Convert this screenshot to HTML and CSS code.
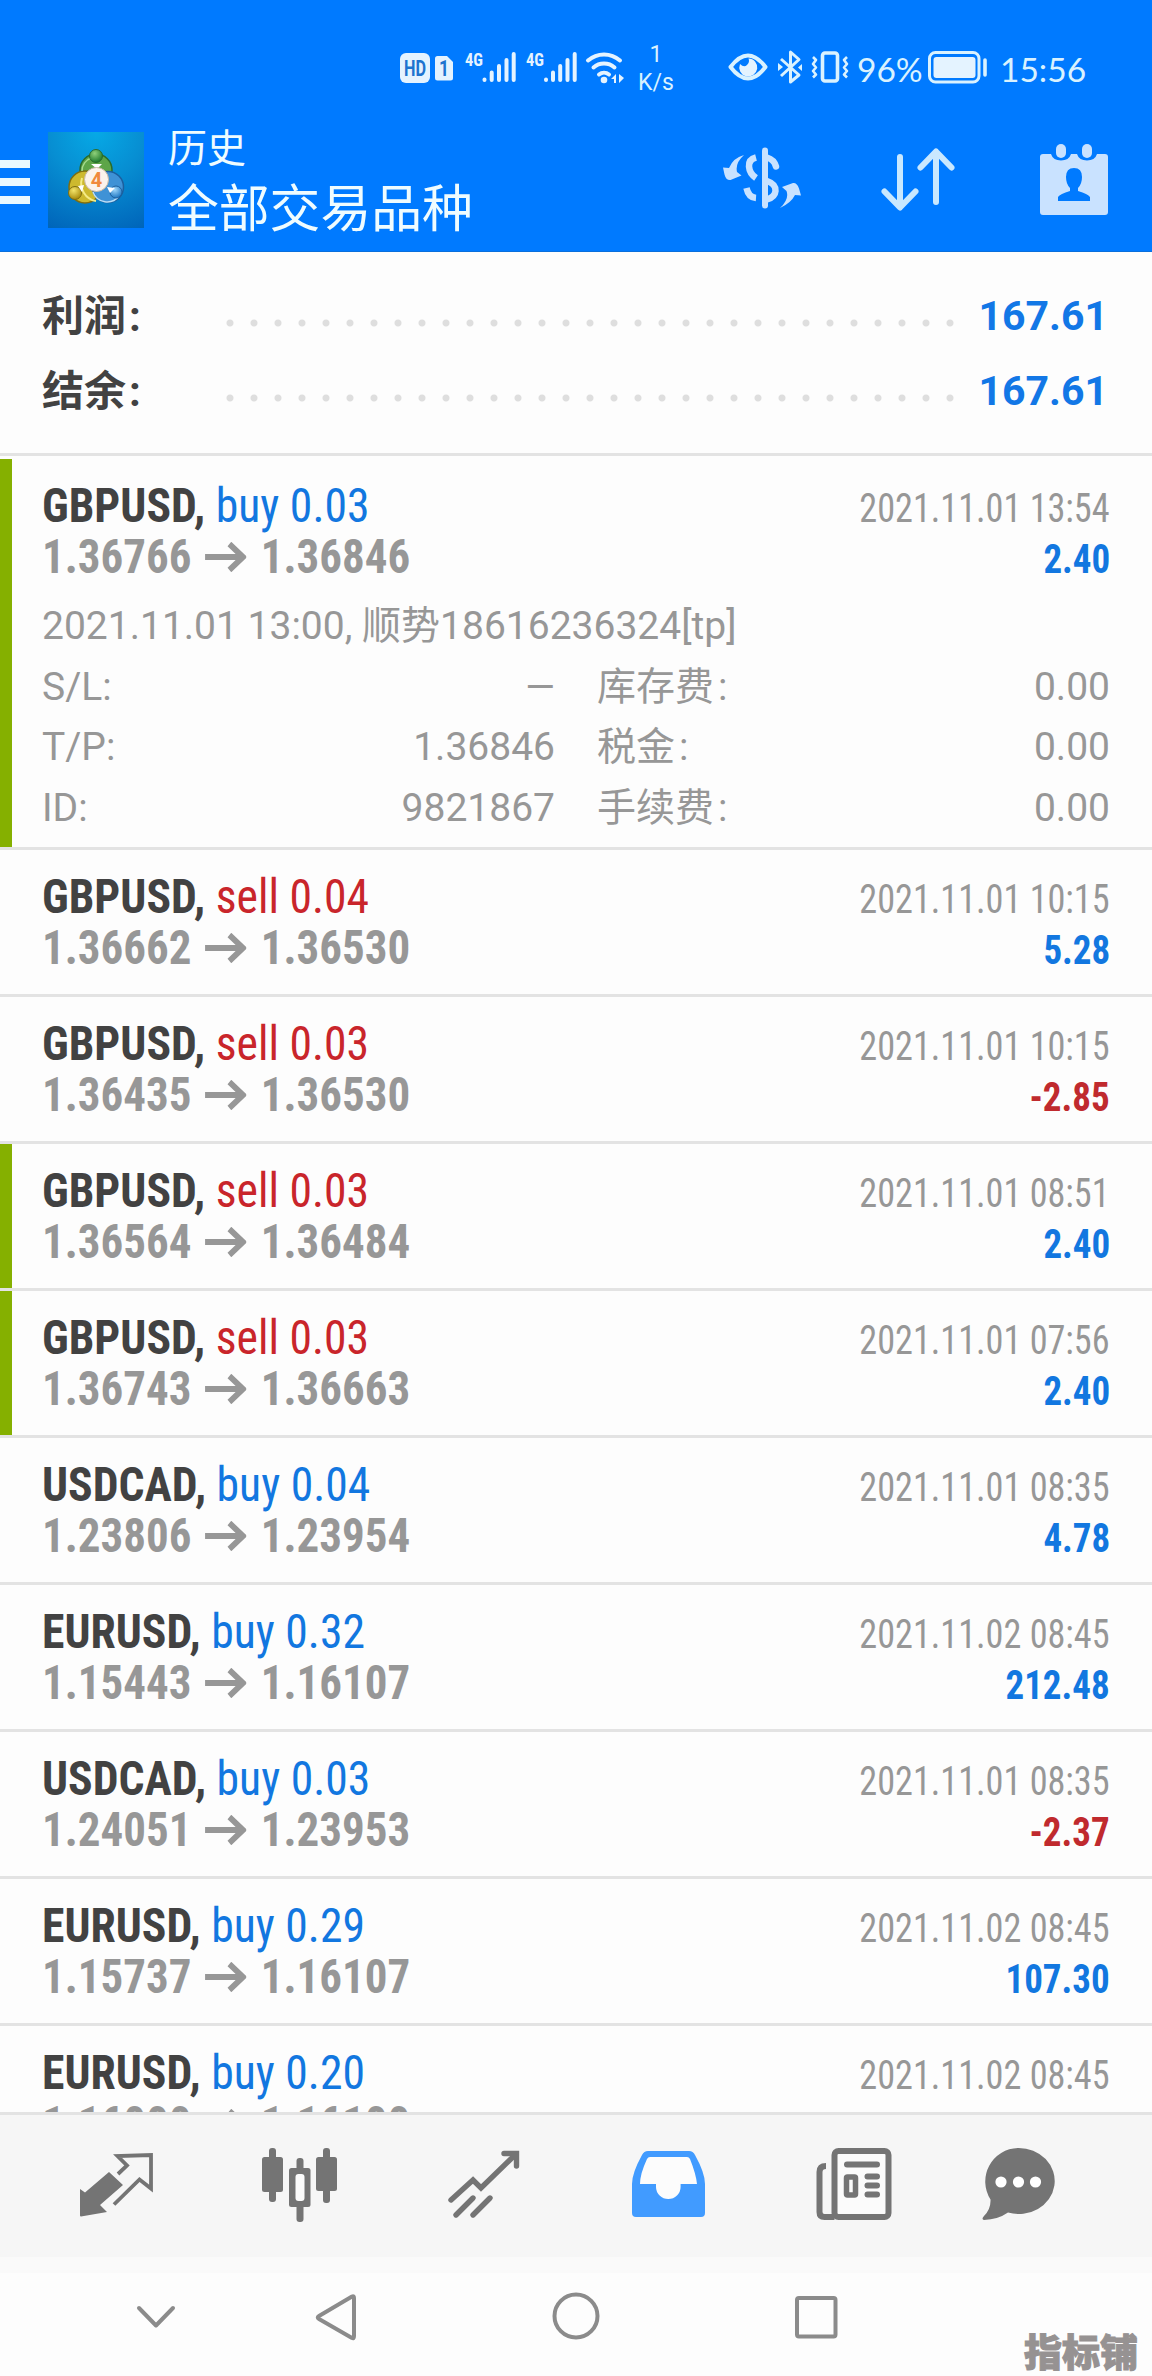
FILE: index.html
```html
<!DOCTYPE html>
<html lang="zh-CN">
<head>
<meta charset="utf-8">
<title>历史</title>
<link rel="stylesheet" href="styles.css">
</head>
<body>
<svg width="0" height="0" class="defs">
  <symbol id="arrow" viewBox="0 0 44 30"><path d="M0 15H40M26 2L40.500 15L26 28" fill="none" stroke="#979797" stroke-width="6"/></symbol>
</svg>
<div class="screen">
<header class="top">
  <div class="status">
    <svg class="st-left" width="224" height="44" viewBox="400 45 224 44">
      <g fill="#e4f3ff">
        <rect x="400" y="53" width="30" height="30" rx="6"/>
        <path d="M438 56h9l6 6v16a2.500 2.500 0 0 1-2.500 2.500h-13a2.500 2.500 0 0 1-2.500-2.500V58.500a2.500 2.500 0 0 1 2.500-2.500z"/>
        <g class="st-4g"><text x="465" y="66" textLength="18" lengthAdjust="spacingAndGlyphs">4G</text><text x="526" y="66" textLength="18" lengthAdjust="spacingAndGlyphs">4G</text></g>
      </g>
      <text class="st-hd" x="404" y="75.500" textLength="22" lengthAdjust="spacingAndGlyphs">HD</text>
      <text class="st-hd" x="439" y="75.500" textLength="10" lengthAdjust="spacingAndGlyphs">1</text>
      <g fill="none" stroke="#e4f3ff" stroke-width="4" stroke-linecap="round">
        <path d="M484.500 79.500v.5M491.700 72.500v7.500M499 66v14M506.500 60v20M513.700 54v26"/>
        <path d="M546 79.500v.5M553 72.500v7.500M560.200 66v14M567.500 60v20M574.700 54v26"/>
        <path d="M588 60.500a24 24 0 0 1 32 0M593.500 67.500a16 16 0 0 1 21 0M599 74.500a8 8 0 0 1 10 0"/>
      </g>
      <circle cx="604" cy="80" r="3.300" fill="#e4f3ff"/>
      <path d="M611 79l5-5v9h-2v-4zM619 74l5 4-5 5z" fill="#e4f3ff"/>
    </svg>
    <div class="st-speed"><span>1</span><span>K/s</span></div>
    <svg class="st-mid" width="124" height="44" viewBox="727 45 124 44">
      <g fill="none" stroke="#d9f2ff" stroke-width="4" stroke-linejoin="round">
        <path d="M730.500 67q17.500-23 35 0q-17.500 23-35 0z"/>
        <path d="M781 59l18 16-8.500 7V52l8.500 7.500L781 76" stroke-width="3"/>
        <rect x="822.500" y="53" width="15" height="28" rx="2.500" stroke-width="3.600"/>
        <path d="M813 57l3 3-3 4 3 3.500-3 3.500 3 3.500-3 3M847 57l-3 3 3 4-3 3.500 3 3.500-3 3.500 3 3" stroke-width="2.600"/>
      </g>
      <path d="M748.500 58.500a9 9 0 1 1-8.500 5.500q4 4 7 1t1.500-6.500z" fill="#e4f3ff"/>
      <path d="M778 63l5 4-5 4zM802 64v7l-4-3.500z" fill="#d9f2ff"/>
    </svg>
    <span class="st-num st-pct">96%</span>
    <svg class="st-bat" width="60" height="34" viewBox="928 50 60 34">
      <rect x="929.500" y="52.500" width="49.500" height="29.500" rx="6" fill="none" stroke="#d9f2ff" stroke-width="3"/>
      <rect x="933.500" y="57" width="42" height="21" rx="3" fill="#e4f3ff"/>
      <path d="M985 60v15" stroke="#d9f2ff" stroke-width="3.600" stroke-linecap="round"/>
    </svg>
    <span class="st-num st-time">15:56</span>
  </div>
  <div class="appbar">
    <div class="burger"><i></i><i></i><i></i></div>
    <svg class="logo" width="96" height="96" viewBox="0 0 96 96">
      <defs>
        <radialGradient id="lbg" cx=".5" cy="0" r="1.100"><stop offset="0" stop-color="#06a9e6"/><stop offset=".45" stop-color="#078ed2"/><stop offset="1" stop-color="#0065ba"/></radialGradient>
        <radialGradient id="gg" cx=".4" cy=".3" r=".7"><stop offset="0" stop-color="#8fd07a"/><stop offset="1" stop-color="#1f7a2c"/></radialGradient>
        <radialGradient id="gy" cx=".4" cy=".3" r=".7"><stop offset="0" stop-color="#f3e46a"/><stop offset="1" stop-color="#a98b0c"/></radialGradient>
        <radialGradient id="gb" cx=".4" cy=".3" r=".7"><stop offset="0" stop-color="#9fd6fb"/><stop offset="1" stop-color="#1f78c4"/></radialGradient>
      </defs>
      <rect width="96" height="96" fill="url(#lbg)"/>
      <circle cx="48" cy="38" r="16" fill="#5da548" stroke="#2b6b2b" stroke-width="1.500"/>
      <circle cx="37" cy="55" r="16" fill="#cdb92e" stroke="#7f6d10" stroke-width="1.500"/>
      <circle cx="60" cy="55" r="15.500" fill="#3f92d6" stroke="#1c5f9e" stroke-width="1.500"/>
      <path d="M34 46a18 18 0 0 0 14 23" fill="none" stroke="#f4eb86" stroke-width="2"/>
      <path d="M45 60a15 15 0 0 0 26 4" fill="none" stroke="#b9def8" stroke-width="1.500"/>
      <path d="M34 39a14 14 0 0 1 9-13" fill="none" stroke="#a6dc90" stroke-width="1.500"/>
      <circle cx="48" cy="24" r="6.500" fill="url(#gg)" stroke="#2b6b2b"/>
      <circle cx="27" cy="61" r="6.500" fill="url(#gy)" stroke="#7f6d10"/>
      <circle cx="68" cy="60" r="6" fill="url(#gb)" stroke="#1c5f9e"/>
      <path d="M43 32h11l-5 5zM30 54l6-1-2 7zM59 55l8 1-5 5z" fill="#fff"/>
      <circle cx="48.500" cy="47.500" r="12" fill="#fbf3ec" stroke="#c9b8a5"/>
      <text class="logo-4" x="48.500" y="55" text-anchor="middle">4</text>
    </svg>
    <div class="titles"><div class="t1">历史</div><div class="t2">全部交易品种</div></div>
    <svg class="a1" width="84" height="80" viewBox="720 140 84 80">
      <path d="M765 150.500v55" stroke="#c9e2ff" stroke-width="6" stroke-linecap="round"/>
      <g fill="none" stroke="#c9e2ff" stroke-width="6.500">
        <path d="M756 157.500q-7.500 2-7 9 .5 7 7 11.500M746.500 188q2 9.500 9.500 10"/>
        <path d="M767 157.500q7 2 9 9" stroke-linecap="round"/><path d="M767 181q9 3 8.500 10-.5 6-8.500 8.500"/>
      </g>
      <path d="M744 155q-11 3-15 13l-6-.5 1.500 7q1.500 6 6 5.500l11-4.500-4.500-3.500q-2-9 7-17zM780 208q11-5 15-13l6 .5-2-7q-2-6-6-5.500l-11 4 4.500 4q3 8-6.500 17z" fill="#c9e2ff"/>
    </svg>
    <svg class="a2" width="84" height="80" viewBox="876 140 84 80"><path d="M900 157v49M884.500 191.500L900 207.500l15.500-16M936 202v-49M920.500 167.500L936 151.500l15.500 16" fill="none" stroke="#c9e8ff" stroke-width="6" stroke-linecap="round" stroke-linejoin="round"/></svg>
    <svg class="a3" width="84" height="80" viewBox="1032 140 84 80">
      <path d="M1043 154h8q2 6.500 10 6.500t10-6.500h6q2 6.500 10 6.500t10-6.500h8q3 0 3 3v55q0 3-3 3h-62q-3 0-3-3v-55q0-3 3-3z" fill="#c9e2ff"/>
      <rect x="1056" y="144" width="10" height="14" rx="5" fill="#c9e2ff"/><rect x="1082" y="144" width="10" height="14" rx="5" fill="#c9e2ff"/>
      <path d="M1058 201v-4q2-3 12-6v-3q-4-4-4-11 0-9 8-9t8 9q0 7-4 11v3q10 3 12 6v4z" fill="#007aff"/>
    </svg>
  </div>
</header>

<section class="summary">
  <div class="sum-row"><span class="sum-l">利润<i>:</i></span><span class="dots"></span><span class="sum-v">167.61</span></div>
  <div class="sum-row"><span class="sum-l">结余<i>:</i></span><span class="dots"></span><span class="sum-v">167.61</span></div>
</section>

<main class="list">
  <article class="deal tp">
    <div class="line"><span class="sym"><b>GBPUSD,</b> <span class="buy">buy 0.03</span></span><span class="date">2021.11.01 13:54</span></div>
    <div class="line"><span class="price">1.36766<svg class="arr"><use href="#arrow"/></svg>1.36846</span><span class="pl">2.40</span></div>
    <div class="detail">
      <div class="note">2021.11.01 13:00, 顺势18616236324[tp]</div>
      <div class="cells"><span>S/L:</span><span class="dash">—</span><span class="c2">库存费<i>:</i></span><span>0.00</span></div>
      <div class="cells"><span>T/P:</span><span>1.36846</span><span class="c2">税金<i>:</i></span><span>0.00</span></div>
      <div class="cells"><span>ID:</span><span>9821867</span><span class="c2">手续费<i>:</i></span><span>0.00</span></div>
    </div>
  </article>
  <article class="deal">
    <div class="line"><span class="sym"><b>GBPUSD,</b> <span class="sell">sell 0.04</span></span><span class="date">2021.11.01 10:15</span></div>
    <div class="line"><span class="price">1.36662<svg class="arr"><use href="#arrow"/></svg>1.36530</span><span class="pl">5.28</span></div>
  </article>
  <article class="deal">
    <div class="line"><span class="sym"><b>GBPUSD,</b> <span class="sell">sell 0.03</span></span><span class="date">2021.11.01 10:15</span></div>
    <div class="line"><span class="price">1.36435<svg class="arr"><use href="#arrow"/></svg>1.36530</span><span class="pl neg">-2.85</span></div>
  </article>
  <article class="deal tp">
    <div class="line"><span class="sym"><b>GBPUSD,</b> <span class="sell">sell 0.03</span></span><span class="date">2021.11.01 08:51</span></div>
    <div class="line"><span class="price">1.36564<svg class="arr"><use href="#arrow"/></svg>1.36484</span><span class="pl">2.40</span></div>
  </article>
  <article class="deal tp">
    <div class="line"><span class="sym"><b>GBPUSD,</b> <span class="sell">sell 0.03</span></span><span class="date">2021.11.01 07:56</span></div>
    <div class="line"><span class="price">1.36743<svg class="arr"><use href="#arrow"/></svg>1.36663</span><span class="pl">2.40</span></div>
  </article>
  <article class="deal">
    <div class="line"><span class="sym"><b>USDCAD,</b> <span class="buy">buy 0.04</span></span><span class="date">2021.11.01 08:35</span></div>
    <div class="line"><span class="price">1.23806<svg class="arr"><use href="#arrow"/></svg>1.23954</span><span class="pl">4.78</span></div>
  </article>
  <article class="deal">
    <div class="line"><span class="sym"><b>EURUSD,</b> <span class="buy">buy 0.32</span></span><span class="date">2021.11.02 08:45</span></div>
    <div class="line"><span class="price">1.15443<svg class="arr"><use href="#arrow"/></svg>1.16107</span><span class="pl">212.48</span></div>
  </article>
  <article class="deal">
    <div class="line"><span class="sym"><b>USDCAD,</b> <span class="buy">buy 0.03</span></span><span class="date">2021.11.01 08:35</span></div>
    <div class="line"><span class="price">1.24051<svg class="arr"><use href="#arrow"/></svg>1.23953</span><span class="pl neg">-2.37</span></div>
  </article>
  <article class="deal">
    <div class="line"><span class="sym"><b>EURUSD,</b> <span class="buy">buy 0.29</span></span><span class="date">2021.11.02 08:45</span></div>
    <div class="line"><span class="price">1.15737<svg class="arr"><use href="#arrow"/></svg>1.16107</span><span class="pl">107.30</span></div>
  </article>
  <article class="deal">
    <div class="line"><span class="sym"><b>EURUSD,</b> <span class="buy">buy 0.20</span></span><span class="date">2021.11.02 08:45</span></div>
    <div class="line"><span class="price">1.16000<svg class="arr"><use href="#arrow"/></svg>1.16100</span></div>
  </article>
</main>

<nav class="tabs">
  <svg viewBox="76 2144 80 80"><path d="M80 2189l5 3.500 24-20.500 14 13-23 20 7 7-26 4.500q-1 0-1-1z" fill="#747474"/><path d="M118 2174l9-8.500-9.500-9.500 33.500-1v33.500L139.500 2179.500 114 2204.500" fill="none" stroke="#747474" stroke-width="3.800"/></svg>
  <svg viewBox="260 2144 80 80"><g fill="#747474"><rect x="262" y="2157" width="21" height="35" rx="2.500"/><rect x="269" y="2148" width="7" height="54" rx="3"/><rect x="316" y="2157" width="21" height="34" rx="2.500"/><rect x="323" y="2148" width="7" height="55" rx="3"/><rect x="296.500" y="2158" width="7" height="64" rx="3"/><rect x="289" y="2168" width="21.500" height="39" rx="2.500"/></g><rect x="295.500" y="2174" width="9" height="27" rx="3" fill="#fbfbfb"/></svg>
  <svg viewBox="444 2144 80 80"><g fill="none" stroke="#747474" stroke-width="5.400" stroke-linecap="round"><path d="M451 2200l22-20 8 8 34-33"/><path d="M504 2153.500h12.500V2166"/><path d="M456 2215l17-17M473 2215l17-17"/></g></svg>
  <svg viewBox="628 2144 80 80"><path d="M648 2151h41q4 0 6 4 10 18 10 29v29q0 4-4 4h-65q-4 0-4-4v-29q0-11 10-29 2-4 6-4z" fill="#419bff"/><path d="M650 2157q-2 0-3 2-7 15-7 25h16v3a12.300 12 0 0 0 24.600 0v-3H697q-1-10-7-25-1-2-3-2z" fill="#fcfcfc"/></svg>
  <svg viewBox="814 2144 80 80"><g fill="none" stroke="#747474" stroke-width="6"><path d="M826 2166q-6.500 0-6.500 6v40q0 5 5 5h10"/><rect x="834.500" y="2151" width="54" height="66" rx="4" fill="#fbfbfb"/><g stroke-linecap="round"><path d="M847 2161h30M867.500 2173h9.500M867.500 2182h9.500M867.500 2191h9.500" transform="translate(0 3.500)"/></g><rect x="846.500" y="2177" width="9" height="18" rx="1" stroke-width="5.500"/></g></svg>
  <svg class="tab-last" viewBox="978 2144 80 80"><path d="M1018 2148a36 33 0 1 1-10 64.500q-10 7-24 7.500-3-1 0-4 7-7 6.500-16.500A33.500 33.500 0 0 1 1018 2148z" fill="#747474"/><g fill="#fff"><circle cx="1001" cy="2182" r="5.600"/><circle cx="1018.500" cy="2182" r="5.600"/><circle cx="1035.500" cy="2182" r="5.600"/></g></svg>
</nav>
<nav class="sysnav">
  <svg width="60" height="60" viewBox="126 2287 60 60"><path d="M139 2309l17 17.500 17-17.500"/></svg>
  <svg width="60" height="60" viewBox="306 2287 60 60"><path d="M352 2297.500q2-1 2 1.500v38q0 3-2 2L319 2320q-2.500-1.500 0-3z"/></svg>
  <svg width="60" height="60" viewBox="546 2287 60 60"><circle cx="576" cy="2317" r="21.500"/></svg>
  <svg width="60" height="60" viewBox="786 2287 60 60"><rect x="797" y="2299" width="38.500" height="38.500" rx="2"/></svg>
  <span class="mark">指标铺</span>
</nav>
</div>
</body>
</html>
```
FILE: styles.css
```css
body { margin: 0; background: #fdfdfd; font-family: Roboto, "Noto Sans CJK SC", sans-serif; }
i { font-style: normal; }
.defs { position: absolute; }
svg { display: block; flex: none; }
.screen { width: 1152px; height: 2376px; overflow: hidden; display: flex; flex-direction: column; }

.top { flex: none; height: 252px; background: #007aff; box-sizing: border-box; border-bottom: 1px solid #0a6fdc; }
.status { height: 118px; box-sizing: border-box; padding: 16px 0 0 400px; display: flex; align-items: center; color: #d9f2ff; }
.st-4g { font: 700 19px "Roboto Condensed", Roboto, sans-serif; }
.st-hd { font: 700 22px Roboto, sans-serif; fill: #1d74cf; }
.st-speed { width: 44px; margin-left: 10px; display: flex; flex-direction: column; align-items: center; font-size: 23px; line-height: 28px; padding-top: 3px; }
.st-mid { margin-left: 49px; }
.st-num { font-family: Lato, sans-serif; font-size: 33.5px; line-height: 40px; white-space: nowrap; padding-top: 3px; }
.st-pct { width: 70px; margin-left: 6px; }
.st-bat { margin-left: 1px; }
.st-time { margin-left: 12px; }

.appbar { height: 133px; box-sizing: border-box; padding-bottom: 9px; display: flex; align-items: center; }
.burger { width: 30px; display: flex; flex-direction: column; gap: 10px; padding-top: 4px; }
.burger i { height: 8px; background: #e9f9ff; }
.logo { margin-left: 18px; }
.logo-4 { font: 700 20px Roboto, sans-serif; fill: #f08a3c; }
.titles { width: 320px; margin-left: 24px; padding-bottom: 3px; color: #effcff; font-family: "Noto Sans CJK SC", sans-serif; }
.t1 { font-size: 39px; line-height: 52px; }
.t2 { font-size: 50.8px; line-height: 68px; }
.a1 { margin-left: 232px; }
.a2, .a3 { margin-left: 72px; }

.summary { flex: none; height: 204px; box-sizing: border-box; border-bottom: 3px solid #e3e3e3; padding: 27px 44px 0 42px; background: #fdfdfd; }
.sum-row { height: 75px; display: flex; align-items: center; }
.sum-l { width: 184px; font-size: 42px; line-height: 75px; font-weight: 700; color: #424242; }
.sum-l i { margin-left: 3px; }
.dots { width: 728px; height: 8px; margin-top: 12px; background: radial-gradient(circle at 4px 4px, #dedede 3px, transparent 4px) 0 0 / 24px 8px; }
.sum-v { flex: 1; text-align: right; font-size: 41px; font-weight: 700; color: #1277e6; line-height: 75px; }

.list { flex: 1; min-height: 0; overflow: hidden; padding-top: 3px; background: #fdfdfd; font-family: "Roboto Condensed", Roboto, "Noto Sans CJK SC", sans-serif; font-stretch: 75%; }
.deal { box-sizing: border-box; min-height: 147px; padding: 21px 42px 0 30px; border-left: 12px solid transparent; background-clip: padding-box; }
.deal::after { content: ""; display: block; height: 3px; margin: 21px -42px 0 -42px; background: #e3e3e3; }
.deal.tp { border-left-color: #85b000; }
.line { height: 51px; line-height: 51px; display: flex; justify-content: space-between; align-items: baseline; white-space: nowrap; }
.sym { font-size: 49px; color: #424242; transform: scaleX(.932); transform-origin: left; }
.buy { color: #1277e0; }
.sell { color: #c9252b; }
.date { font-size: 40px; color: #979797; transform: scaleX(.905); transform-origin: right; }
.price { font-size: 48px; font-weight: 700; color: #979797; display: flex; align-items: baseline; transform: scaleX(.937); transform-origin: left; }
.arr { width: 44px; height: 30px; margin: 0 16px 0 14px; align-self: center; }
.pl { font-size: 40px; font-weight: 700; color: #1277e0; transform: scaleX(.925); transform-origin: right; }
.pl.neg { color: #c02a2e; }
.detail { margin-top: 14px; height: 230px; font: 39px/60.5px Roboto, "Noto Sans CJK SC", sans-serif; font-stretch: 100%; color: #979797; }
.cells { display: grid; grid-template-columns: 150px 363px 200px 1fr; }
.cells span { white-space: nowrap; }
.cells span:nth-child(even) { text-align: right; }
.cells .dash { font-size: 38px; }
.c2 { padding-left: 42px; }
.c2 i { margin-left: 4px; }

.tabs { flex: none; height: 161px; border-top: 3px solid #e3e3e3; background: #f6f6f6; border-bottom: 16px solid #fafafa; box-sizing: border-box; display: flex; gap: 104px; padding: 29px 0 0 76px; }
.tabs svg { width: 80px; height: 80px; }
.tabs svg:nth-child(5) { margin-left: 2px; }
.tabs .tab-last { margin-left: -20px; }
.sysnav { flex: none; height: 103px; position: relative; display: flex; padding: 13px 0 0 126px; box-sizing: border-box; background: #fdfdfd; }
.sysnav svg { fill: none; stroke: #8b8b8b; stroke-width: 4px; stroke-linejoin: round; stroke-linecap: round; }
.sysnav svg:nth-child(1) { margin-right: 120px; }
.sysnav svg:nth-child(2), .sysnav svg:nth-child(3) { margin-right: 180px; }
.mark { position: absolute; right: 14px; bottom: 1px; font: 900 38px/50px "Noto Sans CJK SC", sans-serif; color: #969292; -webkit-text-stroke: 1px #969292; }
.deal.tp::after { position: relative; box-shadow: none; }
```
